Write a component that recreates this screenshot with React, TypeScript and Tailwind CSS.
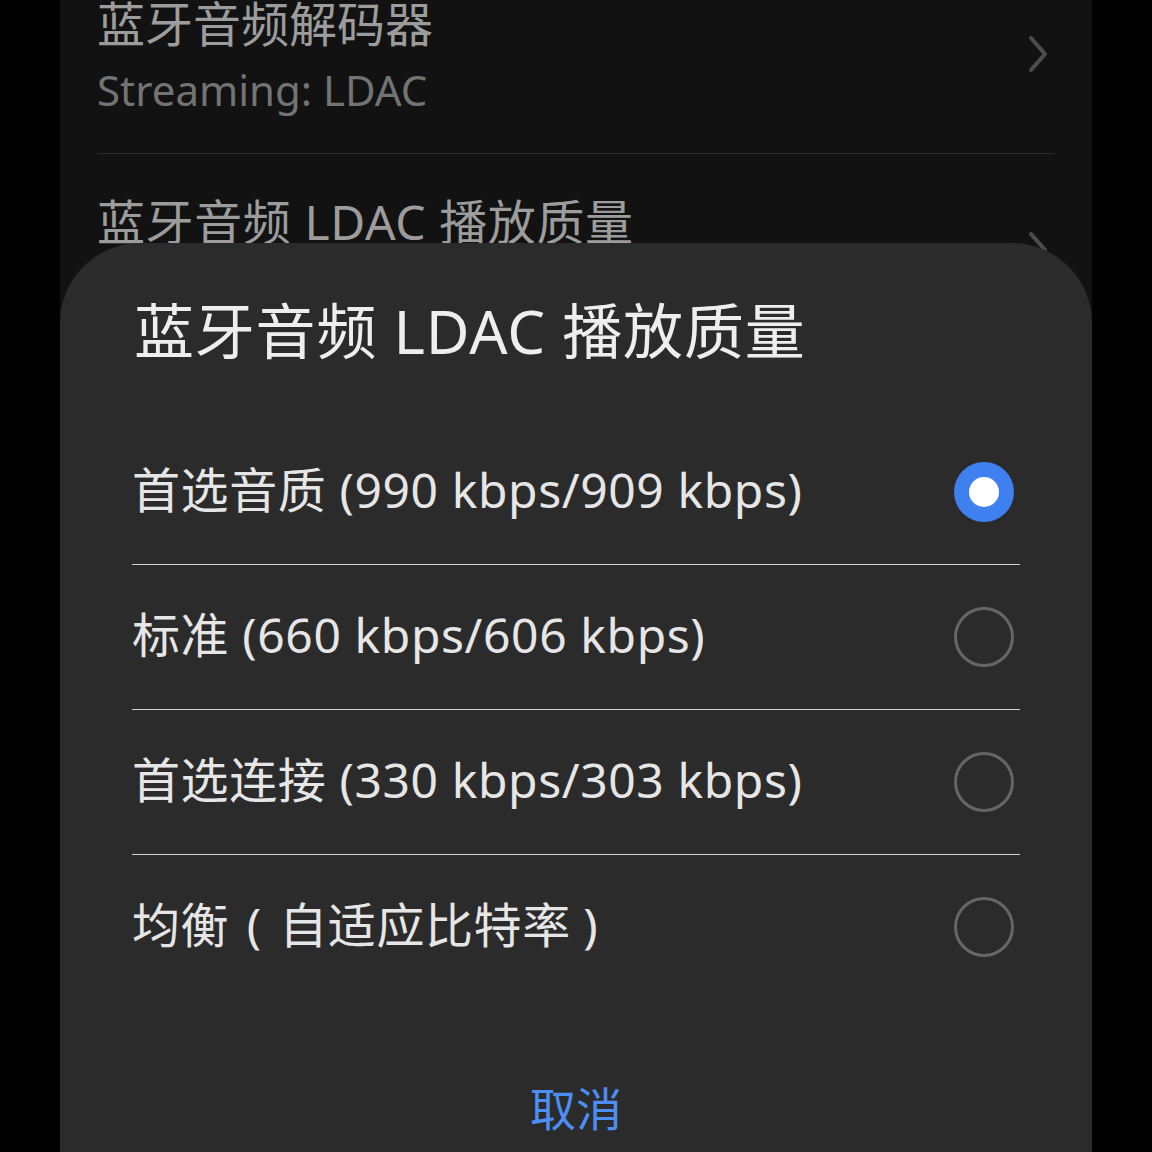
const options = [
  { label: '首选音质 (990 kbps/909 kbps)', selected: true },
  { label: '标准 (660 kbps/606 kbps)', selected: false },
  { label: '首选连接 (330 kbps/303 kbps)', selected: false },
]

function Chevron() {
  return (
    <svg width="22" height="40" viewBox="0 0 22 40" fill="none">
      <path d="M4 4 L18 20 L4 36" stroke="#4d4d4d" strokeWidth="4" strokeLinecap="round" strokeLinejoin="round" />
    </svg>
  )
}

function Radio({ selected }: { selected: boolean }) {
  if (selected) {
    return (
      <div className="w-[60px] h-[60px] rounded-full bg-[#3f80f0] flex items-center justify-center">
        <div className="w-[30px] h-[30px] rounded-full bg-white" />
      </div>
    )
  }
  return <div className="w-[60px] h-[60px] rounded-full border-[3px] border-[#666666]" />
}

function Row({ children, selected, last }: { children: React.ReactNode; selected: boolean; last?: boolean }) {
  return (
    <div>
      <div className="h-[144px] flex items-center justify-between">
        <span className="text-[48px] leading-[56px] tracking-[0.6px] text-[#e6e6e6] -mt-[4px]">{children}</span>
        <div className="mr-[6px]">
          <Radio selected={selected} />
        </div>
      </div>
      {!last && <div className="h-px bg-[#d0d0d0]" />}
    </div>
  )
}

export default function App() {
  return (
    <div
      className="relative w-[1152px] h-[1152px] bg-black overflow-hidden"
      style={{ fontFamily: '"Noto Sans", "Noto Sans CJK SC", sans-serif' }}
    >
      {/* settings list behind the sheet */}
      <div className="mx-[60px] h-full bg-[#121212] px-[37px]">
        <div className="flex items-start justify-between border-b border-[#2c2c2c] h-[154px]">
          <div>
            <div className="text-[48px] leading-[48px] text-[#9c9c9c]">蓝牙音频解码器</div>
            <div className="mt-[18px] text-[42px] leading-[48px] text-[#737373]">Streaming: LDAC</div>
          </div>
          <div className="mt-[34px] mr-[6px]">
            <Chevron />
          </div>
        </div>
        <div className="flex items-start justify-between">
          <div className="mt-[44px] text-[48px] leading-[48px] tracking-[0.6px] text-[#9c9c9c]">蓝牙音频 LDAC 播放质量</div>
          <div className="mt-[76px] mr-[6px]">
            <Chevron />
          </div>
        </div>
      </div>

      {/* bottom sheet dialog */}
      <div className="absolute left-[60px] right-[60px] top-[243px] bottom-[-100px] rounded-[80px] bg-[#2b2b2b] px-[72px]">
        <div className="pt-[56px] pl-[2px] text-[60px] leading-[64px] tracking-[0.8px] text-[#eeeeee]">蓝牙音频 LDAC 播放质量</div>
        <div className="mt-[57px]">
          {options.map((o) => (
            <Row key={o.label} selected={o.selected}>
              {o.label}
            </Row>
          ))}
          <Row selected={false} last>
            均衡<span className="inline-block w-[50px] text-center">(</span>自适应比特率<span className="inline-block w-[40px] text-center">)</span>
          </Row>
        </div>
        <div className="mt-[81px] text-center text-[46px] leading-[56px] text-[#4d8ef5]">取消</div>
      </div>
    </div>
  )
}
